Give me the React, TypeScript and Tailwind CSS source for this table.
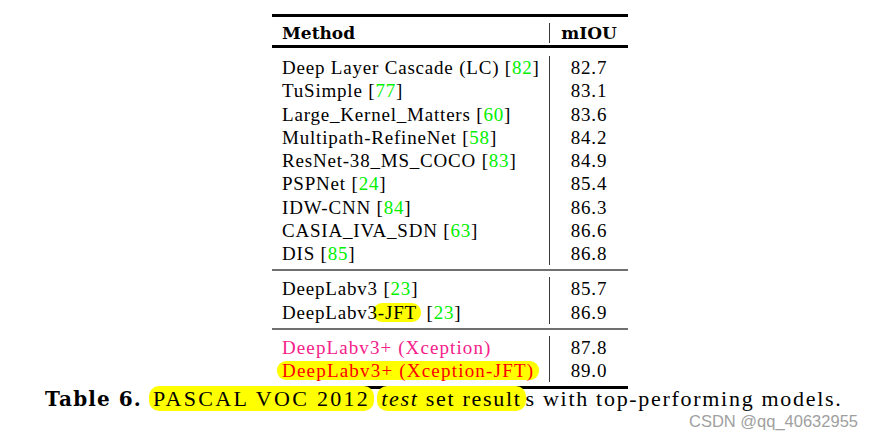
type Row = {
  name: string;
  cite?: string;
  mark?: string; // highlighted tail of the name
  tone?: "pink" | "red";
  score: string;
};

const sections: Row[][] = [
  [
    { name: "Deep Layer Cascade (LC)", cite: "82", score: "82.7" },
    { name: "TuSimple", cite: "77", score: "83.1" },
    { name: "Large_Kernel_Matters", cite: "60", score: "83.6" },
    { name: "Multipath-RefineNet", cite: "58", score: "84.2" },
    { name: "ResNet-38_MS_COCO", cite: "83", score: "84.9" },
    { name: "PSPNet", cite: "24", score: "85.4" },
    { name: "IDW-CNN", cite: "84", score: "86.3" },
    { name: "CASIA_IVA_SDN", cite: "63", score: "86.6" },
    { name: "DIS", cite: "85", score: "86.8" },
  ],
  [
    { name: "DeepLabv3", cite: "23", score: "85.7" },
    { name: "DeepLabv3", mark: "-JFT", cite: "23", score: "86.9" },
  ],
  [
    { name: "DeepLabv3+ (Xception)", tone: "pink", score: "87.8" },
    { name: "DeepLabv3+ (Xception-JFT)", tone: "red", score: "89.0" },
  ],
];

const Name = ({ row }: { row: Row }) => {
  if (row.tone === "red") {
    return (
      <span className="inline-block h-[19px] leading-[19px] -ml-[5px] px-[5px] rounded-[9px] bg-[#ffff00] text-[#ff0000] tracking-[1.2px]">
        {row.name}
      </span>
    );
  }
  return (
    <span className={row.tone === "pink" ? "text-[#f5208a] tracking-[1.1px]" : ""}>
      <span className="relative">{row.name}</span>
      {row.mark && (
        <span className="inline-block h-[19px] leading-[19px] -ml-[5px] pl-[5px] pr-[4px] rounded-[9px] bg-[#ffff00]">
          {row.mark}
        </span>
      )}
      {row.cite && (
        <>
          {" "}[<span className="text-[#00f000]">{row.cite}</span>]
        </>
      )}
    </span>
  );
};

const Section = ({ rows, top }: { rows: Row[]; top: string }) => (
  <div className={`${top} pb-[4px]`}>
    <div className="flex">
      <div className="w-[278px] border-r border-[#3a3a3a] pl-[10px]">
        {rows.map((r) => (
          <div key={r.name + (r.mark ?? "")} className="h-[23.25px] leading-[23.25px] whitespace-nowrap">
            <Name row={r} />
          </div>
        ))}
      </div>
      <div className="flex-1 text-center">
        {rows.map((r) => (
          <div key={r.score} className="h-[23.25px] leading-[23.25px]">
            {r.score}
          </div>
        ))}
      </div>
    </div>
  </div>
);

export default function App() {
  return (
    <div className="relative w-[874px] min-h-[438px] bg-white pt-[14px] text-black [font-family:Liberation_Serif,serif] text-[19px] tracking-[0.8px]">
      <div className="ml-[272px] w-[356px]">
        <div className="h-[3px] bg-black" />
        <div className="flex pt-[6px] pb-[2px] [font-family:DejaVu_Serif,serif] font-bold text-[17px] tracking-normal">
          <div className="w-[278px] border-r border-[#3a3a3a] pl-[10px] h-[20px] leading-[20px]">Method</div>
          <div className="flex-1 text-center h-[20px] leading-[20px]">mIOU</div>
        </div>
        <div className="h-[3px] bg-black" />
        <Section rows={sections[0]} top="pt-[8px]" />
        <div className="h-[2px] bg-[#707070]" />
        <Section rows={sections[1]} top="pt-[6px]" />
        <div className="h-[2px] bg-[#707070]" />
        <Section rows={sections[2]} top="pt-[6px]" />
        <div className="h-[3px] bg-black" />
      </div>

      {/* caption */}
      <p className="ml-[45px] whitespace-nowrap leading-[20px] text-[22px] tracking-[1.7px]">
        <span className="[font-family:DejaVu_Serif,serif] font-bold text-[20px] tracking-[1.1px]">Table 6.</span>{" "}
        <span className="px-[4px] rounded-[10px] bg-[#ffff00] tracking-[2.3px]">PASCAL VOC 2012</span>
        <span className="ml-[3px] px-[4px] rounded-[10px] bg-[#ffff00]">
          <i>test</i> set result
        </span>
        s with top-performing models.
      </p>

      {/* watermark */}
      <div className="absolute right-[16px] top-[413px] [font-family:Liberation_Sans,sans-serif] text-[16.5px] leading-[16px] tracking-normal text-[#a0a0a0]">
        CSDN @qq_40632955
      </div>
    </div>
  );
}
